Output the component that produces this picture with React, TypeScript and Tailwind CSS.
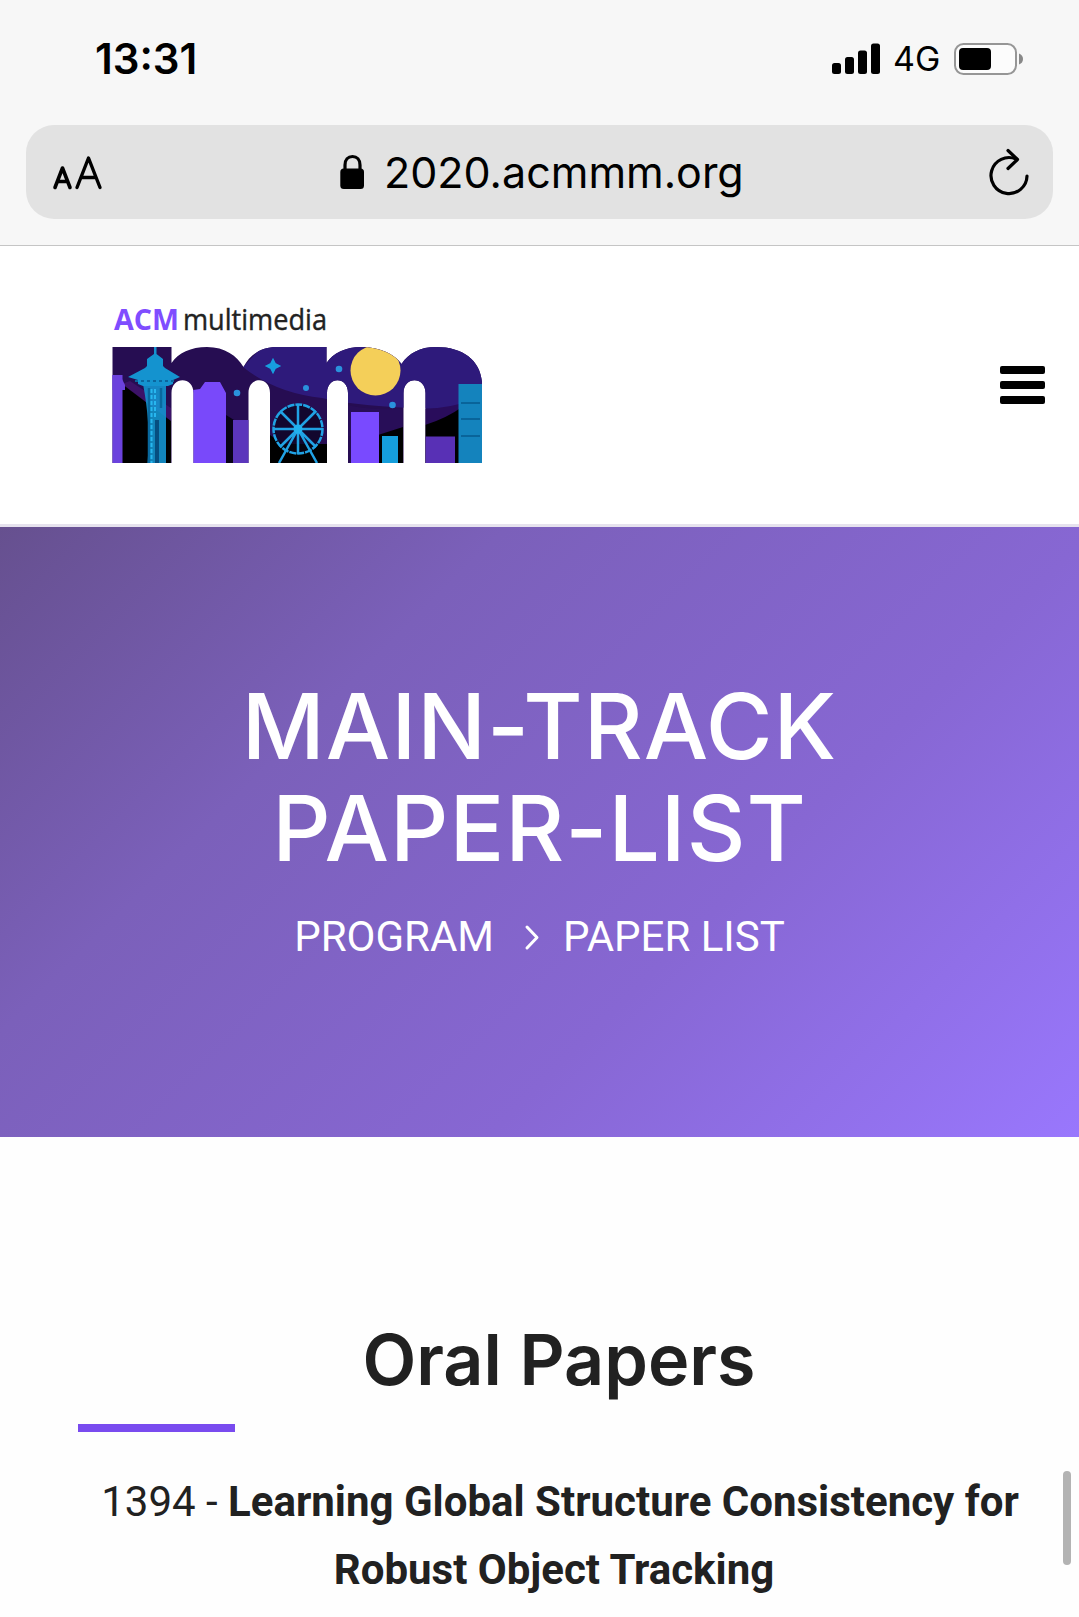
import React from 'react';

function StatusBar() {
  return (
    <div className="flex h-[125px] items-start justify-between pl-[95px] pr-[55px] pt-[34px] font-['Inter'] text-black">
      <div className="text-[42px] font-semibold leading-[50px]">13:31</div>
      <div className="flex h-[50px] items-center">
        <svg width="50" height="32" viewBox="0 0 50 32">
          <rect x="1" y="20" width="9" height="11" rx="2.5" />
          <rect x="14" y="14" width="9" height="17" rx="2.5" />
          <rect x="27" y="7.500" width="9" height="23.500" rx="2.500" />
          <rect x="40" y="0.500" width="9" height="30.500" rx="2.500" />
        </svg>
        <span className="ml-[12px] w-[48px] text-[34px] leading-[50px]">4G</span>
        <svg className="ml-[13px]" width="70" height="32" viewBox="0 0 70 32">
          <rect x="1" y="1" width="61" height="30" rx="8.500" fill="#fcfcfc" stroke="#969696" strokeWidth="2" />
          <rect x="5" y="5" width="32" height="22" rx="4" />
          <path d="M65 10.500Q69 12 69 16T65 21.500Z" fill="#888" />
        </svg>
      </div>
    </div>
  );
}

function AddressBar() {
  return (
    <div className="mx-[26px] flex h-[94px] items-center rounded-[28px] bg-[#e2e2e2]">
      <svg className="ml-[25px]" width="54" height="40" viewBox="51 152 54 40" fill="none" stroke="#000" strokeLinecap="round" strokeLinejoin="round">
        <path d="M55 187.500L62.500 168L70 187.500M57.500 181.500H67.500" strokeWidth="3.600" />
        <path d="M77 187.500L88.500 158L100 187.500M81 177.500H96" strokeWidth="3.400" />
      </svg>
      <svg className="ml-[234px]" width="27" height="36" viewBox="339 154 27 36">
        <path d="M345 170V165C345 160 348 156.500 352.500 156.500S360 160 360 165V170" fill="none" stroke="#000" strokeWidth="3.200" />
        <rect x="340.300" y="168.500" width="23.700" height="20.500" rx="3.500" />
      </svg>
      <span className="ml-[18px] w-[380px] whitespace-nowrap font-['Inter'] text-[43px] leading-[50px] text-black">2020.acmmm.org</span>
      <svg className="ml-[222px]" width="46" height="54" viewBox="987 145 46 54" fill="none" stroke="#000" strokeWidth="3.200" strokeLinecap="round" strokeLinejoin="round">
        <path d="M1017 159A18 18 0 1 0 1028 176" />
        <path d="M1009 150.500L1018.500 159.500L1009 168.500" />
      </svg>
    </div>
  );
}

function Logo() {
  return (
    <svg width="400" height="190" viewBox="100 290 400 190">
      <defs>
        <clipPath id="mm">
          <path d="M112.500 347H171.500V363C178 353 191 347 207 347C225 347 237 356 243.500 367C250 354 262 347 277 347H326.500V363C333 353 346 347 361 347C379 347 395 354 401.500 364C409 353 420 347 436 347C463 347 480 360 482 382V463H425.500V393C425.500 376 403.500 376 403.500 393V463H348V393C348 376 327 376 327 393V463H270V393C270 376 248.500 376 248.500 393V463H193.500V393C193.500 376 171.500 376 171.500 393V463H112.500Z" />
        </clipPath>
      </defs>
      <text x="114" y="329.500" fontFamily="'Open Sans'" fontWeight="700" fontSize="29" fill="#7f4dff" textLength="65" lengthAdjust="spacingAndGlyphs">ACM</text>
      <text x="183" y="329.500" fontFamily="'Open Sans'" fontSize="29" fill="#222" stroke="#222" strokeWidth="0.400" textLength="144" lengthAdjust="spacingAndGlyphs">multimedia</text>
      <g clipPath="url(#mm)">
        <rect x="112" y="346" width="372" height="118" fill="#260d52" />
        <path d="M243 367L262 347H484V403Q450 411 410 408Q350 405 322 398Q275 393 243 367Z" fill="#2e1a7b" />
        <path d="M122 384L171 412V464H122Z" fill="#000" />
        <path d="M122 384L171 421V408L130 381Z" fill="#3c1268" />
        <rect x="112" y="375" width="10.500" height="90" fill="#6b42dd" />
        <path d="M112 375H120L125 385V390H112Z" fill="#6b42dd" />
        <g fill="#1493cf">
          <path d="M154 347H156.500V354L163 359V366L165 368L180 377L173 380V384L168 386H143L138 384V380L128 377L145 368L147 366V359L154 354Z" />
          <path d="M143 384H166V463H147.500C150 435 148 410 143 384Z" opacity=".9" />
        </g>
        <path d="M149 388V463M161 388V408" stroke="#08689e" strokeWidth="2.500" />
        <path d="M155 389V418M151.500 389V463" stroke="#27b6ef" strokeWidth="2" strokeDasharray="4 2" />
        <path d="M157 420V463" stroke="#064e80" strokeWidth="4" />
        <path d="M135 381H174" stroke="#0b669e" strokeWidth="2" strokeDasharray="3 3" />
        <path d="M193 390L200 389L205 382H220L226 393V463H193Z" fill="#7949fa" />
        <path d="M226 415L234 420V463H226Z" fill="#090318" />
        <path d="M233 420H249V463H233Z" fill="#5c36bc" />
        <path d="M270 435L283 444H327V463H270Z" fill="#000" />
        <circle cx="298" cy="429" r="25" fill="#08041c" fillOpacity=".65" />
        <g stroke="#20a2e4" strokeWidth="2.500" fill="none">
          <circle cx="298" cy="429" r="24.500" strokeDasharray="7 1" />
          <path d="M298 404V454M273 429H323M280 411L316 447M280 447L316 411M298 429L279 463M298 429L317 463" />
        </g>
        <circle cx="298" cy="429" r="4.500" fill="#22b1ef" />
        <path d="M348 405Q365 410 402 409V436H348Z" fill="#280e58" />
        <path d="M425 409Q450 408 482 398V410L425 425Z" fill="#290c5b" />
        <path d="M378 435L403 427V464H378ZM425 425Q447 418 462 407H482V464H425Z" fill="#000" />
        <rect x="351" y="412" width="28" height="52" fill="#794aff" />
        <rect x="382" y="436" width="16" height="28" fill="#159edb" />
        <rect x="425" y="436.500" width="30" height="27" fill="#5830b5" />
        <rect x="458.500" y="384" width="24" height="80" fill="#1483bd" />
        <path d="M461 403H480M461 419H480M461 436H480" stroke="#09649a" strokeWidth="2" />
        <circle cx="375.500" cy="370.500" r="25" fill="#f4cf59" />
        <path d="M273 360L275 364L279 366L275 368L273 372L271 368L267 366L271 364Z" fill="#179edf" stroke="#179edf" strokeWidth="2" />
        <g fill="#2a92dd">
          <circle cx="237" cy="393" r="3.300" />
          <circle cx="306" cy="388" r="3" />
          <circle cx="339" cy="369" r="3.300" />
          <circle cx="392.500" cy="405" r="3.300" />
        </g>
      </g>
    </svg>
  );
}

function SiteHeader() {
  return (
    <header className="flex h-[281px] items-start justify-between border-b-[3px] border-[#e6e2ee] bg-white pl-[100px] pr-[34px]">
      <div className="mt-[44px]">
        <Logo />
      </div>
      <div className="mt-[120px] flex w-[45px] flex-col gap-[7px]">
        <div className="h-2 rounded-[2px] bg-black" />
        <div className="h-2 rounded-[2px] bg-black" />
        <div className="h-2 rounded-[2px] bg-black" />
      </div>
    </header>
  );
}

function Hero() {
  return (
    <section className="flex h-[610px] flex-col items-center bg-[linear-gradient(135deg,#66508f_0%,#7b60ba_30%,#8767d3_65%,#9977fd_100%)] pt-[148px] text-white">
      <h1 className="flex flex-col items-center whitespace-nowrap font-['Inter'] text-[91px] font-medium leading-[102px]">
        <span className="tracking-[1px]">MAIN-TRACK</span>
        <span className="tracking-[1px]">PAPER-LIST</span>
      </h1>
      <nav className="mt-[28px] flex items-center whitespace-nowrap font-['Roboto'] text-[42px] leading-[60px]">
        <span>PROGRAM</span>
        <svg className="ml-[29px] mr-[20px]" width="20" height="28" viewBox="0 0 20 28" fill="none" stroke="#fff" strokeWidth="3" strokeLinecap="round" strokeLinejoin="round">
          <path d="M4 4L14 14.500L4 25" />
        </svg>
        <span>PAPER LIST</span>
      </nav>
    </section>
  );
}

function Papers() {
  return (
    <main className="relative h-[480px] overflow-hidden bg-[#fefefe] text-[#212121]">
      <h2 className="pl-[39px] pt-[178px] text-center font-['Inter'] text-[70px] font-semibold leading-[90px]">Oral Papers</h2>
      <div className="ml-[78px] mt-[19px] h-2 w-[157px] bg-[#794bef]" />
      <div className="mt-[36px] flex flex-col items-center whitespace-nowrap font-['Roboto'] text-[42px] leading-[68px]">
        <p className="ml-[41px]">1394 - <b>Learning Global Structure Consistency for</b></p>
        <p className="ml-[29px] font-bold">Robust Object Tracking</p>
      </div>
      <div className="absolute right-2 top-[334px] h-[94px] w-2 rounded-full bg-[#b3b3b3]" />
    </main>
  );
}

export default function App() {
  return (
    <div className="h-[1617px] w-[1079px] overflow-hidden bg-white">
      <div className="h-[246px] border-b border-[#c5c5c5] bg-[#f7f7f7]">
        <StatusBar />
        <AddressBar />
      </div>
      <SiteHeader />
      <Hero />
      <Papers />
    </div>
  );
}
